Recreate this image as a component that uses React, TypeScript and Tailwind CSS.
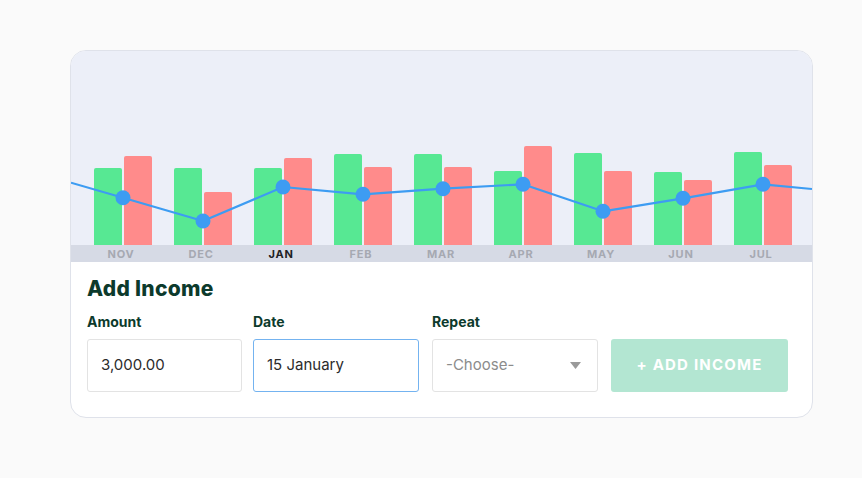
import React from "react";

const months = ["NOV", "DEC", "JAN", "FEB", "MAR", "APR", "MAY", "JUN", "JUL"];

// bar heights in px (income, expense) and balance dot y inside the chart
const bars = [
  { income: 77, expense: 89, dot: 146.7 },
  { income: 77, expense: 53, dot: 170 },
  { income: 77, expense: 87, dot: 136 },
  { income: 91, expense: 78, dot: 143.3 },
  { income: 91, expense: 78, dot: 137.7 },
  { income: 74, expense: 99, dot: 133.3 },
  { income: 92, expense: 74, dot: 160.3 },
  { income: 73, expense: 65, dot: 147.3 },
  { income: 93, expense: 80, dot: 133.3 },
];

const CHART_W = 741;
const CHART_H = 194;

const Chart = () => {
  const points = [
    `0,131.7`,
    ...bars.map((b, i) => `${52 + 80 * i},${b.dot}`),
    `${CHART_W},138`,
  ].join(" ");

  return (
    <svg width={CHART_W} height={CHART_H} className="block">
      {bars.map((b, i) => {
        const cx = 52 + 80 * i;
        return (
          <g key={i}>
            <rect
              x={cx - 29}
              y={CHART_H - b.income}
              width={28}
              height={b.income + 3}
              rx={2}
              fill="#57e893"
            />
            <rect
              x={cx + 1}
              y={CHART_H - b.expense}
              width={28}
              height={b.expense + 3}
              rx={2}
              fill="#ff8b8b"
            />
          </g>
        );
      })}
      <polyline
        points={points}
        fill="none"
        stroke="#3d9cf2"
        strokeWidth={2.2}
        strokeLinejoin="round"
      />
      {bars.map((b, i) => (
        <circle key={i} cx={52 + 80 * i} cy={b.dot} r={7.5} fill="#3d9cf2" />
      ))}
    </svg>
  );
};

const Field = ({
  label,
  width,
  children,
}: {
  label: string;
  width: string;
  children: React.ReactNode;
}) => (
  <div className={`flex flex-col ${width}`}>
    <span className="text-[14px] leading-[17px] font-bold text-[#0c3a2c]">
      {label}
    </span>
    <div className="mt-[9px]">{children}</div>
  </div>
);

export default function App() {
  return (
    <div
      className="min-h-[478px] w-full bg-[#fafafa] pt-[50px] pl-[70px]"
      style={{ fontFamily: "Inter, 'Open Sans', sans-serif" }}
    >
      <div className="w-[743px] h-[368px] overflow-hidden rounded-[16px] border border-[#dfe2ea] bg-white">
        <div className="bg-[#eceff8]">
          <Chart />
        </div>
        <div className="flex h-[17px] items-center bg-[#d6dae5] pl-[10px]">
          {months.map((m) => (
            <span
              key={m}
              className={`w-[80px] pt-[1px] text-center text-[11px] font-bold tracking-[0.8px] ${
                m === "JAN" ? "text-[#1f2124]" : "text-[#a6a9b2]"
              }`}
            >
              {m}
            </span>
          ))}
        </div>

        <div className="px-[16px] pt-[14px]">
          <h2 className="text-[21px] leading-[25px] font-extrabold tracking-[0.3px] text-[#0c3a2c]">
            Add Income
          </h2>
          <div className="mt-[12px] flex items-end">
            <Field label="Amount" width="w-[155px]">
              <div className="flex h-[53px] items-center rounded-[3px] border border-[#e3e3e3] px-[13px] text-[15px] text-[#2b2b2b]">
                3,000.00
              </div>
            </Field>
            <div className="ml-[11px]">
              <Field label="Date" width="w-[166px]">
                <div className="flex h-[53px] items-center rounded-[3px] border border-[#74b3f0] px-[13px] text-[15px] text-[#2b2b2b]">
                  15 January
                </div>
              </Field>
            </div>
            <div className="ml-[13px]">
              <Field label="Repeat" width="w-[166px]">
                <div className="flex h-[53px] items-center justify-between rounded-[3px] border border-[#e3e3e3] pl-[13px] pr-[16px] text-[15px] text-[#8c8c8c]">
                  <span>-Choose-</span>
                  <svg width="11" height="7" viewBox="0 0 11 7">
                    <path d="M0 0 L11 0 L5.5 7 Z" fill="#9a9a9a" />
                  </svg>
                </div>
              </Field>
            </div>
            <button className="ml-[13px] flex h-[53px] w-[177px] items-center justify-center rounded-[3px] bg-[#b3e6d2] text-[15px] font-bold tracking-[1.2px] text-white">
              + ADD INCOME
            </button>
          </div>
        </div>
      </div>
    </div>
  );
}
